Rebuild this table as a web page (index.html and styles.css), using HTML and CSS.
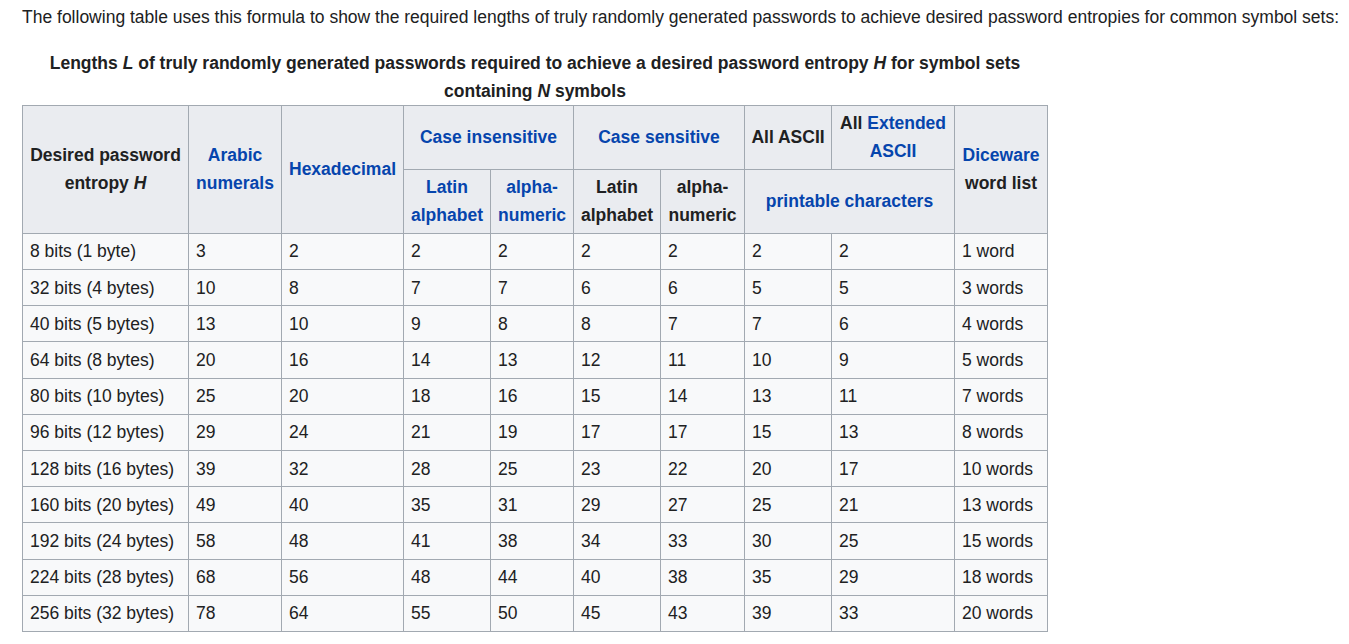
FILE: index.html
```html
<!DOCTYPE html>
<html lang="en">
<head>
<meta charset="utf-8">
<title>Password lengths</title>
<link rel="stylesheet" href="styles.css">
</head>
<body>
<div class="content">
<p class="intro">The following table uses this formula to show the required lengths of truly randomly generated passwords to achieve desired password entropies for common symbol sets:</p>
<table class="wikitable">
<caption>Lengths <i>L</i> of truly randomly generated passwords required to achieve a desired password entropy <i>H</i> for symbol sets containing <i>N</i> symbols</caption>
<colgroup>
<col class="c1"><col class="c2"><col class="c3"><col class="c4"><col class="c5"><col class="c6"><col class="c7"><col class="c8"><col class="c9"><col class="c10">
</colgroup>
<thead>
<tr class="h1">
<th rowspan="2">Desired password entropy <i>H</i></th>
<th rowspan="2"><a href="#">Arabic numerals</a></th>
<th rowspan="2"><a href="#">Hexadecimal</a></th>
<th colspan="2"><a href="#">Case insensitive</a></th>
<th colspan="2"><a href="#">Case sensitive</a></th>
<th class="nowrap">All ASCII</th>
<th>All <a href="#">Extended ASCII</a></th>
<th rowspan="2"><a href="#">Diceware</a> word list</th>
</tr>
<tr class="h2">
<th><a href="#">Latin alphabet</a></th>
<th><a href="#">alpha-numeric</a></th>
<th>Latin alphabet</th>
<th>alpha-numeric</th>
<th colspan="2"><a href="#">printable characters</a></th>
</tr>
</thead>
<tbody>
<tr><td>8 bits (1 byte)</td><td>3</td><td>2</td><td>2</td><td>2</td><td>2</td><td>2</td><td>2</td><td>2</td><td>1 word</td></tr>
<tr><td>32 bits (4 bytes)</td><td>10</td><td>8</td><td>7</td><td>7</td><td>6</td><td>6</td><td>5</td><td>5</td><td>3 words</td></tr>
<tr><td>40 bits (5 bytes)</td><td>13</td><td>10</td><td>9</td><td>8</td><td>8</td><td>7</td><td>7</td><td>6</td><td>4 words</td></tr>
<tr><td>64 bits (8 bytes)</td><td>20</td><td>16</td><td>14</td><td>13</td><td>12</td><td>11</td><td>10</td><td>9</td><td>5 words</td></tr>
<tr><td>80 bits (10 bytes)</td><td>25</td><td>20</td><td>18</td><td>16</td><td>15</td><td>14</td><td>13</td><td>11</td><td>7 words</td></tr>
<tr><td>96 bits (12 bytes)</td><td>29</td><td>24</td><td>21</td><td>19</td><td>17</td><td>17</td><td>15</td><td>13</td><td>8 words</td></tr>
<tr><td>128 bits (16 bytes)</td><td>39</td><td>32</td><td>28</td><td>25</td><td>23</td><td>22</td><td>20</td><td>17</td><td>10 words</td></tr>
<tr><td>160 bits (20 bytes)</td><td>49</td><td>40</td><td>35</td><td>31</td><td>29</td><td>27</td><td>25</td><td>21</td><td>13 words</td></tr>
<tr><td>192 bits (24 bytes)</td><td>58</td><td>48</td><td>41</td><td>38</td><td>34</td><td>33</td><td>30</td><td>25</td><td>15 words</td></tr>
<tr><td>224 bits (28 bytes)</td><td>68</td><td>56</td><td>48</td><td>44</td><td>40</td><td>38</td><td>35</td><td>29</td><td>18 words</td></tr>
<tr><td>256 bits (32 bytes)</td><td>78</td><td>64</td><td>55</td><td>50</td><td>45</td><td>43</td><td>39</td><td>33</td><td>20 words</td></tr>
</tbody>
</table>
</div>
</body>
</html>
```
FILE: styles.css
```css
html, body {
  margin: 0;
  padding: 0;
  background: #ffffff;
}
body {
  font-family: "Liberation Sans", Arial, sans-serif;
  font-size: 17.5px;
  line-height: 28px;
  color: #202122;
}
.content {
  padding: 3px 0 0 22px;
}
.intro {
  margin: 0 0 17.5px 0;
}
a {
  color: #0645ad;
  text-decoration: none;
}
.wikitable {
  border-collapse: collapse;
  table-layout: fixed;
  width: 1025px;
  background: #f8f9fa;
  border: 1px solid #a2a9b1;
  color: #202122;
  margin: 0;
}
.wikitable caption {
  font-weight: bold;
  padding: 0 20px;
}
.wikitable th,
.wikitable td {
  border: 1px solid #a2a9b1;
  padding: 3.6px 7px;
  line-height: 28px;
}
.wikitable th {
  background: #eaecf0;
  text-align: center;
  vertical-align: middle;
  font-weight: bold;
}
.wikitable th.nowrap {
  white-space: nowrap;
  padding-left: 4px;
  padding-right: 4px;
}
.wikitable td {
  text-align: left;
}
.c1 { width: 166px; }
.c2 { width: 93px; }
.c3 { width: 122px; }
.c4 { width: 87px; }
.c5 { width: 83px; }
.c6 { width: 87px; }
.c7 { width: 84px; }
.c8 { width: 87px; }
.c9 { width: 123px; }
.c10 { width: 93px; }
```
